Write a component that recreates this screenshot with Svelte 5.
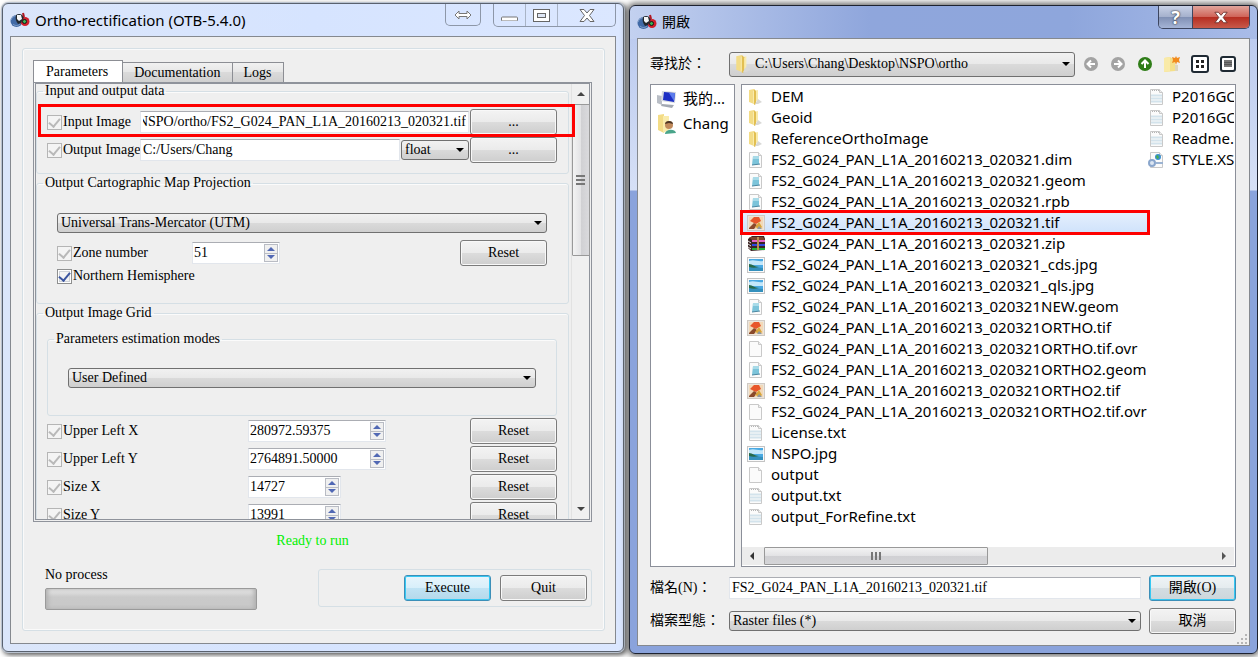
<script>
  const tabs = ['Parameters', 'Documentation', 'Logs'];
  let activeTab = $state('Parameters');

  let inputImage = $state('C:/Users/Chang/Desktop/NSPO/ortho/FS2_G024_PAN_L1A_20160213_020321.tif');
  let outputImage = $state('C:/Users/Chang');
  let zone = $state('51');
  let northern = $state(true);

  let gridRows = $state([
    { id: 'ulx', label: 'Upper Left X', value: '280972.59375', wide: true },
    { id: 'uly', label: 'Upper Left Y', value: '2764891.50000', wide: true },
    { id: 'sizex', label: 'Size X', value: '14727', wide: false },
    { id: 'sizey', label: 'Size Y', value: '13991', wide: false }
  ]);

  const files = [
    { name: 'DEM', kind: 'folder' },
    { name: 'Geoid', kind: 'folder' },
    { name: 'ReferenceOrthoImage', kind: 'folder' },
    { name: 'FS2_G024_PAN_L1A_20160213_020321.dim', kind: 'data' },
    { name: 'FS2_G024_PAN_L1A_20160213_020321.geom', kind: 'data' },
    { name: 'FS2_G024_PAN_L1A_20160213_020321.rpb', kind: 'data' },
    { name: 'FS2_G024_PAN_L1A_20160213_020321.tif', kind: 'tif' },
    { name: 'FS2_G024_PAN_L1A_20160213_020321.zip', kind: 'zip' },
    { name: 'FS2_G024_PAN_L1A_20160213_020321_cds.jpg', kind: 'jpg' },
    { name: 'FS2_G024_PAN_L1A_20160213_020321_qls.jpg', kind: 'jpg' },
    { name: 'FS2_G024_PAN_L1A_20160213_020321NEW.geom', kind: 'data' },
    { name: 'FS2_G024_PAN_L1A_20160213_020321ORTHO.tif', kind: 'tif' },
    { name: 'FS2_G024_PAN_L1A_20160213_020321ORTHO.tif.ovr', kind: 'blank' },
    { name: 'FS2_G024_PAN_L1A_20160213_020321ORTHO2.geom', kind: 'data' },
    { name: 'FS2_G024_PAN_L1A_20160213_020321ORTHO2.tif', kind: 'tif' },
    { name: 'FS2_G024_PAN_L1A_20160213_020321ORTHO2.tif.ovr', kind: 'blank' },
    { name: 'License.txt', kind: 'txt' },
    { name: 'NSPO.jpg', kind: 'jpg' },
    { name: 'output', kind: 'blank' },
    { name: 'output.txt', kind: 'txt' },
    { name: 'output_ForRefine.txt', kind: 'txt' },
    { name: 'P2016GC', kind: 'txt' },
    { name: 'P2016GC', kind: 'txt' },
    { name: 'Readme.txt', kind: 'txt' },
    { name: 'STYLE.XSL', kind: 'xsl' }
  ];
  let selected = $state(6);
  let fileName = $state('FS2_G024_PAN_L1A_20160213_020321.tif');

  function pick(i) {
    selected = i;
    fileName = files[i].name;
  }

  // keep the end of a long path visible
  function scrollToEnd(node) {
    node.scrollLeft = node.scrollWidth;
  }
</script>

{#snippet appIcon()}
  <svg class="app-icon" viewBox="0 0 20 16" aria-hidden="true">
    <circle cx="6.500" cy="9" r="6" fill="#416aa6" />
    <path d="M1 8c1-3 4-5 7-4M3 12c2 2 5 2 7 0" fill="none" stroke="#86a3cc" stroke-width="1" />
    <circle cx="15" cy="9.500" r="4.500" fill="#d0202c" />
    <path d="M6 3c3-2 6-1 8 2l-3 6-3 1c-2-3-3-5-2-9z" fill="#22282e" />
    <path d="M7 3l4 0 1 4-3 2-2-2z" fill="#f3f5f7" />
    <path d="M13 1l1 4" stroke="#b01822" stroke-width="2" />
    <circle cx="14.500" cy="9.500" r="2" fill="#38b356" stroke="#151515" stroke-width="1" />
  </svg>
{/snippet}

{#snippet folderShape()}
  <path d="M2 1l5-1v15l-5-2z" fill="#f3dc86" />
  <path d="M6 2l5-1v10l-5 4z" fill="#f9ebac" />
  <path d="M7 0l2 2v13l-2 1z" fill="#e2bf52" />
  <path d="M11 10l4 3-4 2-3 0z" fill="#d9d9d6" />
{/snippet}

{#snippet fileIcon(kind)}
  <svg class="file-icon" viewBox="0 0 18 16" aria-hidden="true">
    {#if kind === 'folder'}
      {@render folderShape()}
    {:else if kind === 'tif'}
      <rect x="0.500" y="0.500" width="17" height="15" fill="#ece5dc" stroke="#cfcac4" />
      <rect x="2" y="2" width="14" height="12" fill="#f2d9b8" />
      <path d="M3 6l4-4h5l2 4-5 3z" fill="#e8562a" />
      <path d="M2 13l5-5 3 2-3 4H2z" fill="#8a4a2c" />
      <path d="M8 12l4-5 3 5-2 2z" fill="#d9a63a" />
      <path d="M10 14l2-3 3 3z" fill="#8d99a4" />
    {:else if kind === 'jpg'}
      <rect x="0.500" y="0.500" width="17" height="15" fill="#fafafa" stroke="#c4c4c4" />
      <rect x="2" y="2" width="14" height="12" fill="#4aa9e2" />
      <path d="M2 4c5-2 9 1 14 0v4H2z" fill="#c3e7fa" />
      <path d="M2 9c4-1 6 2 14 2v3H2z" fill="#3490bd" />
      <path d="M2 7c4 0 5 3 10 3-4 1-7 1-10 0z" fill="#276a4a" />
    {:else if kind === 'zip'}
      <path d="M1 3l4-3h12l1 3v11l-14 1-3-3z" fill="#3c2424" />
      <path d="M2 1h14l2 3H5z" fill="#7c4630" />
      <path d="M5 5h13" stroke="#e465c8" stroke-width="2" />
      <path d="M5 9h13" stroke="#2d49e0" stroke-width="2" />
      <path d="M5 13h13" stroke="#1fae36" stroke-width="2" />
      <path d="M1 5l3 2M1 8l3 2M1 11l3 2" stroke="#ddd" />
      <path d="M11 1v13" stroke="#b98d52" stroke-width="2" />
    {:else}
      <path d="M2.500 0.500h9l3 3v12h-12z" fill="#fbfbfb" stroke="#c9c9c9" />
      <path d="M11.500 0.500v3h3" fill="#eee" stroke="#c9c9c9" />
      {#if kind === 'data'}
        <path d="M6 4h6v8l-7 1z" fill="#7cc4da" />
        <path d="M6 4h6v3H6z" fill="#a9dbe8" />
        <path d="M5 13l8-1" stroke="#4a86a0" />
      {:else if kind === 'txt'}
        <path d="M4 1.500h7" stroke="#b5b5b5" stroke-dasharray="1 1" />
        <path d="M3 6.500h11M3 9.500h11M3 12.500h11" stroke="#d3e3ec" stroke-width="2" />
      {:else if kind === 'xsl'}
        <circle cx="10" cy="5" r="3" fill="#3a8fd0" />
        <path d="M8 4l2-1 1 3-2 1z" fill="#4cb04a" />
        <circle cx="4" cy="11" r="3" fill="#dce6f2" stroke="#8aa6cc" stroke-width="2" />
        <path d="M8 11h7" stroke="#9bb3d2" stroke-width="2" />
      {/if}
    {/if}
  </svg>
{/snippet}

{#snippet spin(label, wide, value)}
  <span class="spin" class:wide>
    <input class="field" type="text" aria-label={label} {value} />
    <span class="steps">
      <button type="button" aria-label="{label} up"><i class="tri up"></i></button>
      <button type="button" aria-label="{label} down"><i class="tri down"></i></button>
    </span>
  </span>
{/snippet}

<main class="desktop">
  <section class="window ortho" aria-label="Ortho-rectification">
    <header class="titlebar">
      {@render appIcon()}
      <h1>Ortho-rectification (OTB-5.4.0)</h1>
      <div class="caption">
        <button type="button" class="swap" aria-label="Switch">
          <svg width="18" height="10" viewBox="0 0 18 10"><path d="M1 5l4-4v2.500h8V1l4 4-4 4V6.500H5V9z" fill="#fff" stroke="#777" /></svg>
        </button>
        <div class="caption-group">
          <button type="button" class="min" aria-label="Minimize">
            <svg width="17" height="12" viewBox="0 0 17 12"><rect x="0.500" y="8" width="16" height="4" rx="1" fill="#fff" stroke="#777" /></svg>
          </button>
          <button type="button" class="max" aria-label="Maximize">
            <svg width="17" height="13" viewBox="0 0 17 13"><rect x="0.500" y="0.500" width="16" height="12" fill="#fff" stroke="#666" /><rect x="4.500" y="4.500" width="8" height="4" fill="#dfe7f5" stroke="#666" /></svg>
          </button>
          <button type="button" class="close" aria-label="Close">
            <svg width="16" height="13" viewBox="0 0 16 13"><path d="M1 .5h4L8 4l3-3.500h4L10.500 6.500l4.500 6h-4L8 9l-3 3.500H1l4.500-6z" fill="#fff" stroke="#666" /></svg>
          </button>
        </div>
      </div>
    </header>

    <div class="client">
      <div class="frame">
        <div class="tabs" role="tablist">
          {#each tabs as tab}
            <button type="button" role="tab" class:active={tab === activeTab} aria-selected={tab === activeTab} onclick={() => (activeTab = tab)}>{tab}</button>
          {/each}
        </div>

        <div class="pane">
          <div class="scroll">
            <fieldset class="group io">
              <legend>Input and output data</legend>
              <div class="row">
                <label><input type="checkbox" checked disabled />Input Image</label>
                <input class="field grow" type="text" aria-label="Input Image" bind:value={inputImage} use:scrollToEnd />
                <button type="button" class="btn">...</button>
              </div>
              <div class="row">
                <label><input type="checkbox" checked disabled />Output Image</label>
                <input class="field grow" type="text" aria-label="Output Image" bind:value={outputImage} />
                <span class="combo type">
                  <select aria-label="Output pixel type"><option>float</option></select>
                </span>
                <button type="button" class="btn">...</button>
              </div>
            </fieldset>

            <fieldset class="group projection">
              <legend>Output Cartographic Map Projection</legend>
              <span class="combo">
                <select aria-label="Output Cartographic Map Projection"><option>Universal Trans-Mercator (UTM)</option></select>
              </span>
              <div class="row">
                <label><input type="checkbox" checked disabled />Zone number</label>
                {@render spin('Zone number', false, zone)}
                <button type="button" class="btn">Reset</button>
              </div>
              <label><input type="checkbox" bind:checked={northern} />Northern Hemisphere</label>
            </fieldset>

            <fieldset class="group grid">
              <legend>Output Image Grid</legend>
              <fieldset class="group modes">
                <legend>Parameters estimation modes</legend>
                <span class="combo">
                  <select aria-label="Parameters estimation modes"><option>User Defined</option></select>
                </span>
              </fieldset>
              {#each gridRows as row (row.id)}
                <div class="row">
                  <label><input type="checkbox" checked disabled />{row.label}</label>
                  {@render spin(row.label, row.wide, row.value)}
                  <button type="button" class="btn">Reset</button>
                </div>
              {/each}
            </fieldset>
          </div>
          <div class="vbar" aria-hidden="true">
            <i class="tri up"></i>
            <div class="thumb"><i></i></div>
            <i class="tri down"></i>
          </div>
          <div class="mark"></div>
        </div>

        <p class="status">Ready to run</p>

        <div class="bottom">
          <div class="progress">
            <span id="progress-label">No process</span>
            <div class="bar" role="progressbar" aria-labelledby="progress-label" aria-valuenow="0"></div>
          </div>
          <div class="actions">
            <button type="button" class="btn primary">Execute</button>
            <button type="button" class="btn">Quit</button>
          </div>
        </div>
      </div>
    </div>
  </section>

  <section class="window dialog" aria-label="開啟">
    <header class="titlebar">
      {@render appIcon()}
      <h2>開啟</h2>
      <div class="caption">
        <button type="button" class="help" aria-label="Help">?</button>
        <button type="button" class="kill" aria-label="Close">
          <svg width="14" height="13" viewBox="0 0 16 13"><path d="M1 .5h4L8 4l3-3.500h4L10.500 6.500l4.500 6h-4L8 9l-3 3.500H1l4.500-6z" fill="#fff" stroke="#69302c" /></svg>
        </button>
      </div>
    </header>

    <div class="client">
      <div class="lookin">
        <label for="lookin">尋找於：</label>
        <span class="combo">
          <svg class="combo-icon" width="18" height="18" viewBox="0 0 16 16" aria-hidden="true">{@render folderShape()}</svg>
          <select id="lookin"><option>C:\Users\Chang\Desktop\NSPO\ortho</option></select>
        </span>
        <div class="tools">
          <button type="button" aria-label="Back">
            <svg width="16" height="16" viewBox="0 0 16 16"><circle cx="8" cy="8" r="7" fill="#a3a3a3" /><path d="M12 8H5M8 4.500L4.500 8 8 11.500" fill="none" stroke="#fff" stroke-width="2" /></svg>
          </button>
          <button type="button" aria-label="Forward">
            <svg width="16" height="16" viewBox="0 0 16 16"><circle cx="8" cy="8" r="7" fill="#a3a3a3" /><path d="M4 8h7M8 4.500L11.500 8 8 11.500" fill="none" stroke="#fff" stroke-width="2" /></svg>
          </button>
          <button type="button" aria-label="Parent directory">
            <svg width="16" height="16" viewBox="0 0 16 16"><circle cx="8" cy="8" r="7" fill="#2f7d18" /><path d="M8 12V5M4.500 8L8 4.500 11.500 8" fill="none" stroke="#fff" stroke-width="2" /></svg>
          </button>
          <button type="button" aria-label="New folder">
            <svg width="16" height="16" viewBox="0 0 16 16"><path d="M0 2l6-1 5 3v11l-11 1z" fill="#f5e08a" /><path d="M0 2l6-1v14l-6 1z" fill="#f9eaa8" /><path d="M11 9h3v6h-3z" fill="#ddd6bf" /><path d="M12 0l1 2 3-1-1 3 1 3-3-1-1 3-1-3-3 1 1-3-1-3 3 1z" fill="#f28b1d" /></svg>
          </button>
          <button type="button" aria-label="List view">
            <svg width="18" height="18" viewBox="0 0 18 18"><rect x="1" y="1" width="16" height="16" rx="2" fill="#fff" stroke="#1f2a33" stroke-width="2" /><path d="M5 5h3v3H5zM10 5h3v3h-3zM5 10h3v3H5zM10 10h3v3h-3z" fill="#222" /></svg>
          </button>
          <button type="button" aria-label="Detail view">
            <svg width="16" height="16" viewBox="0 0 16 16"><rect x="1" y="1" width="14" height="14" rx="2" fill="#fff" stroke="#1f2a33" stroke-width="2" /><path d="M4 4h8v7H4z" fill="#777" /><path d="M4 6.500h8M4 8.500h8" stroke="#555" /></svg>
          </button>
        </div>
      </div>

      <div class="browser">
        <ul class="places">
          <li>
            <svg width="20" height="18" viewBox="0 0 20 18" aria-hidden="true"><path d="M0 5l5 1v9l-5-2z" fill="#b9bec6" /><path d="M5 1l14 1-1 11-14-2z" fill="#d5d9e0" /><path d="M7 2l11 1-1 9-11-2z" fill="#1c2fc4" /><path d="M12 3l6 0-1 8z" fill="#5c7cec" /><path d="M5 14l12 1-2 3-11-2z" fill="#a3a9b2" /></svg>
            我的...
          </li>
          <li>
            <svg width="20" height="20" viewBox="0 0 20 20" aria-hidden="true"><path d="M1 1l6-1v19l-6-3z" fill="#f3dc86" /><path d="M6 2l6 0v14l-6 3z" fill="#f9ebac" /><path d="M8 20c0-5 10-6 11-1z" fill="#4aa58a" /><circle cx="12" cy="11" r="4" fill="#c08a5c" /><path d="M8 10c0-4 8-4 8 0l-4-1z" fill="#4b3524" /></svg>
            Chang
          </li>
        </ul>
        <div class="listing">
          <ul class="files">
            {#each files as file, i}
              <li>
                <button type="button" class:selected={i === selected} onclick={() => pick(i)}>
                  {@render fileIcon(file.kind)}{file.name}
                </button>
              </li>
            {/each}
          </ul>
          <div class="hbar" aria-hidden="true">
            <i class="tri left"></i>
            <div class="thumb"><i></i></div>
            <i class="tri right"></i>
          </div>
        </div>
      </div>

      <form class="open-form" onsubmit={(e) => e.preventDefault()}>
        <label for="filename">檔名(N)：</label>
        <input id="filename" class="field" type="text" bind:value={fileName} />
        <button type="submit" class="btn primary pale">開啟(O)</button>
        <label for="filetype">檔案型態：</label>
        <span class="combo">
          <select id="filetype"><option>Raster files (*)</option></select>
        </span>
        <button type="button" class="btn">取消</button>
      </form>
      <svg class="grip" width="10" height="10" viewBox="0 0 10 10" aria-hidden="true"><path d="M8 0h2v2H8zM4 4h2v2H4zM8 4h2v2H8zM0 8h2v2H0zM4 8h2v2H4zM8 8h2v2H8z" fill="#b5b5b5" /></svg>
    </div>
  </section>
</main>

<style>
  :global(body) {
    background: #fff;
  }

  .desktop, .desktop * {
    box-sizing: border-box;
  }

  .desktop {
    display: grid;
    grid-template-columns: 622fr 629fr;
    gap: 5px;
    min-height: 100vh;
    padding: 3px 0 3px 2px;
    overflow: hidden;
    font: 14px/18px "Liberation Serif", "Noto Sans CJK TC", serif;
    color: #000;
  }

  button, input, select {
    font: inherit;
    color: inherit;
    margin: 0;
    padding: 0;
  }

  button {
    border: 0;
    background: none;
  }

  h1, h2, p, ul, fieldset {
    margin: 0;
    padding: 0;
  }

  ul {
    list-style: none;
  }

  /* window chrome */
  .window {
    display: flex;
    flex-direction: column;
    min-width: 0;
    padding: 0 7px 7px;
    border: 1px solid #59616e;
    border-radius: 6px;
  }

  .ortho {
    margin-bottom: 2px;
    background: linear-gradient(90deg, #dbe6fa, #d6e4ff 50%, #dbe7ff);
    box-shadow: 0 0 0 1px #b9c2cf, 2px 2px 5px 1px #555;
  }

  .dialog {
    margin-top: 2px;
    border-color: #1d2230;
    background:
      linear-gradient(90deg, #c3d1f0 0, #8fa6dc 240px, #8ea6dc 70%, #a9bce8) top / 100% 33px no-repeat,
      linear-gradient(#b7c7ee, #d6e0f6 184px, #8aa3dc 185px);
    box-shadow: 0 0 6px 2px #666;
  }

  .titlebar {
    display: flex;
    align-items: center;
    gap: 5px;
    height: 32px;
  }

  .titlebar h1, .titlebar h2 {
    flex: 1;
    font: 15px/20px "Noto Sans", "Noto Sans CJK TC", sans-serif;
    white-space: nowrap;
  }

  .titlebar h2 {
    font-size: 14px;
  }

  .app-icon {
    width: 20px;
    height: 16px;
  }

  .caption {
    display: flex;
    align-self: flex-start;
    gap: 12px;
  }

  .caption-group {
    display: flex;
    border: 1px solid #8d97a8;
    border-top: 0;
    border-radius: 0 0 5px 5px;
  }

  .caption button {
    display: flex;
    align-items: center;
    justify-content: center;
    height: 22px;
  }

  .swap {
    width: 36px;
    border: 1px solid #8d97a8;
    border-top: 0;
    border-radius: 0 0 5px 5px;
  }

  .min, .max {
    width: 32px;
    border-right: 1px solid #a9b4c6;
  }

  .close {
    width: 57px;
  }

  .dialog .caption {
    gap: 0;
    border: 1px solid #3d4660;
    border-top: 0;
    border-radius: 0 0 5px 5px;
    overflow: hidden;
  }

  .caption .help {
    width: 33px;
    background: linear-gradient(#c8d1e6, #a4b0cc 50%, #8090b4 51%, #a5b4d6);
    color: #fff;
    font: bold 18px/22px "Noto Sans", sans-serif;
    text-shadow: 0 0 1px #333, 0 0 2px #333;
  }

  .caption .kill {
    width: 57px;
    border-left: 1px solid #3d4660;
    background: linear-gradient(#e0a59c, #d0655a 48%, #b52c20 50%, #c85a4a);
  }

  .client {
    display: flex;
    flex: 1;
    flex-direction: column;
    min-width: 0;
    border: 1px solid #85898f;
    background: #efefef;
  }

  .ortho .client {
    padding: 11px 10px 12px 11px;
  }

  /* shared controls */
  .btn {
    flex: none;
    width: 87px;
    height: 26px;
    border: 1px solid #7b7b7b;
    border-radius: 3px;
    background: linear-gradient(#f3f3f3, #ebebeb 48%, #dcdcdc 50%, #cecece);
    box-shadow: inset 0 0 0 1px #f8f8f8;
  }

  .btn.primary {
    border-color: #3c8fb8;
    background: linear-gradient(#e8f5fc, #d8effa 48%, #c0e3f4 50%, #b4d8ea);
    box-shadow: inset 0 0 0 1px #35c8f3;
  }

  .btn.pale {
    background: linear-gradient(#eff4f6, #e5ecef 48%, #d3dde2 50%, #ccd6db);
  }

  .field {
    min-width: 0;
    height: 22px;
    padding: 0 2px;
    border: 1px solid #e2e6ec;
    border-top-color: #abadb3;
    background: #fff;
    outline: 0;
  }

  .combo {
    position: relative;
    display: flex;
    min-width: 0;
  }

  .combo select {
    appearance: none;
    width: 100%;
    height: 20px;
    padding: 0 20px 0 3px;
    border: 1px solid #707070;
    border-radius: 3px;
    background: linear-gradient(#f1f1f1, #e9e9e9 48%, #dadada 50%, #cfcfcf);
  }

  .combo::after {
    content: '';
    position: absolute;
    right: 5px;
    top: calc(50% - 2px);
    border: 4px solid transparent;
    border-top-color: #000;
    border-bottom: 0;
    pointer-events: none;
  }

  .combo-icon {
    position: absolute;
    left: 5px;
    top: 3px;
  }

  label {
    display: flex;
    align-items: center;
    gap: 1px;
    white-space: nowrap;
  }

  input[type='checkbox'] {
    appearance: none;
    display: grid;
    flex: none;
    place-items: center;
    width: 15px;
    height: 15px;
    border: 1px solid #8e8f8f;
    background: #f4f4f4;
    box-shadow: inset 0 0 0 1px #fff, inset 0 0 0 2px #cfd3d8;
  }

  input[type='checkbox']:checked::after {
    content: '';
    width: 5px;
    height: 9px;
    margin-bottom: 2px;
    border: solid #3b55a0;
    border-width: 0 2px 2px 0;
    transform: rotate(40deg);
  }

  input[type='checkbox']:disabled {
    border-color: #b5b5b5;
    box-shadow: none;
  }

  input[type='checkbox']:disabled::after {
    border-color: #b9b9b9;
  }

  .tri {
    width: 0;
    height: 0;
    border: 4px solid transparent;
  }

  .tri.up {
    border-top: 0;
    border-bottom-color: #444;
  }

  .tri.down {
    border-bottom: 0;
    border-top-color: #444;
  }

  .tri.left {
    border-left: 0;
    border-right-color: #333;
  }

  .tri.right {
    border-right: 0;
    border-left-color: #555;
  }

  /* ortho-rectification form */
  .frame {
    display: flex;
    flex: 1;
    flex-direction: column;
    padding: 11px 12px 20px 10px;
    border: 1px solid #d5dfe5;
    border-radius: 3px;
    box-shadow: inset 0 0 0 1px #fafafa;
  }

  .tabs {
    display: flex;
    align-items: flex-end;
    height: 22px;
  }

  .tabs button {
    height: 20px;
    padding: 0 11px;
    border: 1px solid #8c8e94;
    border-left: 0;
    border-bottom: 0;
    background: linear-gradient(#f1f1f1, #e6e6e6 48%, #dadada 50%, #d0d0d0);
  }

  .tabs button.active {
    height: 22px;
    padding: 0 14px 0 12px;
    border-left: 1px solid #8c8e94;
    background: #fff;
  }

  .pane {
    position: relative;
    display: flex;
    flex: 1 1 0;
    min-height: 0;
    border: 3px double #8f939b;
    border-top-width: 2px;
  }

  .scroll {
    flex: 1;
    min-width: 0;
    height: 435px;
    padding-right: 2px;
    overflow: hidden;
  }

  .group {
    --pad: 10px;
    min-width: 0;
    border: 1px solid #d5dfe5;
    border-radius: 3px;
    box-shadow: inset 0 1px #fbfbfb;
  }

  .group legend {
    height: 18px;
    margin-left: calc(6px - var(--pad));
    padding: 0 2px;
  }

  .io {
    height: 92px;
    margin-top: -2px;
    padding: 8px 11px 0 var(--pad);
  }

  .row {
    display: flex;
    align-items: center;
    gap: 2px;
    height: 28px;
  }

  .io .row {
    gap: 1px;
  }

  .io label {
    width: 92px;
  }

  .grow {
    flex: 1;
  }

  .type {
    width: 68px;
  }

  .projection {
    --pad: 20px;
    height: 130px;
    padding: 21px 21px 0 var(--pad);
  }

  .projection .row {
    margin-top: 6px;
  }

  .projection .row label {
    width: 133px;
  }

  .row .spin + .btn {
    margin-left: auto;
  }

  .grid {
    padding: 8px 11px 0 var(--pad);
  }

  .modes {
    --pad: 20px;
    height: 86px;
    padding: 20px 20px 0 var(--pad);
    margin-bottom: 1px;
  }

  .grid .row label {
    width: 199px;
  }

  .spin {
    display: flex;
    width: 93px;
    height: 22px;
    border: 1px solid #e2e6ec;
    border-top-color: #abadb3;
    background: #fff;
  }

  .spin.wide {
    width: 138px;
  }

  .spin .field {
    flex: 1;
    height: 20px;
    padding: 0 1px;
    border: 0;
  }

  .projection .spin {
    width: 88px;
  }

  .steps {
    display: flex;
    flex-direction: column;
    width: 14px;
    margin: 1px;
    border: 1px solid #b9bcc4;
    background: #f0f0f0;
  }

  .steps button {
    display: grid;
    flex: 1;
    place-items: center;
  }

  .steps button + button {
    border-top: 1px solid #b9bcc4;
  }

  .steps .tri.up {
    border-bottom-color: #5168b4;
  }

  .steps .tri.down {
    border-top-color: #5168b4;
  }

  .vbar {
    display: flex;
    flex-direction: column;
    align-items: center;
    width: 18px;
    padding: 8px 0;
    border-left: 1px solid #e2e2e2;
    background: #f0f0f0;
  }

  .vbar .thumb {
    display: grid;
    place-items: center;
    width: 18px;
    height: 152px;
    margin: 8px 0 auto;
    border: 1px solid #999;
    border-radius: 1px;
    background: linear-gradient(90deg, #f3f3f3, #e3e3e5 48%, #d0d0d3 50%, #dadadd);
  }

  .vbar .thumb i {
    width: 9px;
    height: 10px;
    background: repeating-linear-gradient(#777 0 2px, transparent 2px 4px);
  }

  /* highlights the input image row, running over the scrollbar */
  .mark {
    position: absolute;
    top: 20px;
    left: 2px;
    right: 14px;
    height: 33px;
    border: 3px solid #fe0000;
    pointer-events: none;
  }

  .status {
    margin-top: 10px;
    color: #00f000;
    text-align: center;
  }

  .bottom {
    display: flex;
    justify-content: space-between;
    align-items: center;
    margin-top: 16px;
  }

  .progress {
    width: 38%;
    margin-left: 12px;
  }

  .bar {
    height: 22px;
    margin-top: 4px;
    border: 1px solid #9a9a9a;
    border-radius: 2px;
    background: linear-gradient(#e9e9e9, #cacaca 40%, #c8c8c8);
    box-shadow: inset 3px 0 4px -1px #b0b0b0, inset -3px 0 4px -1px #b0b0b0;
  }

  .actions {
    display: flex;
    gap: 9px;
    width: 49%;
    justify-content: flex-end;
    padding: 5px 4px;
    border: 1px solid #d5dfe5;
    border-radius: 3px;
  }

  /* open dialog */
  .dialog .client {
    position: relative;
    padding: 13px 13px 11px 12px;
  }

  .lookin {
    display: flex;
    align-items: center;
    height: 24px;
    margin-bottom: 8px;
  }

  .dialog label {
    flex: none;
    width: 79px;
  }

  .lookin .combo {
    flex: 1;
  }

  .lookin select {
    height: 25px;
    padding-left: 25px;
  }

  .tools {
    display: flex;
    align-items: center;
    gap: 11px;
    margin-left: 8px;
  }

  .tools button {
    display: flex;
  }

  .browser {
    display: flex;
    flex: 1;
    gap: 6px;
    min-height: 0;
    font: 15px/21px "Noto Sans", "Noto Sans CJK TC", sans-serif;
  }

  .places, .listing {
    border: 1px solid #8b8f99;
    background: #fff;
  }

  .places {
    flex: none;
    width: 85px;
    padding: 1px 0 0 6px;
    overflow: hidden;
  }

  .places li {
    display: flex;
    align-items: center;
    gap: 6px;
    height: 25px;
    white-space: nowrap;
  }

  .listing {
    display: flex;
    flex: 1;
    flex-direction: column;
    min-width: 0;
    padding: 1px 1px 1px 0;
  }

  .files {
    display: grid;
    flex: 1;
    grid-auto-flow: column;
    grid-template-rows: repeat(21, 21px);
    grid-auto-columns: 401px;
    /* clips the last column but lets the selection frame cross the left border */
    clip-path: inset(0 0 0 -6px);
  }

  .files button {
    display: flex;
    align-items: center;
    gap: 6px;
    width: 100%;
    height: 21px;
    padding-left: 5px;
    white-space: nowrap;
  }

  .files .selected {
    width: calc(100% + 5px);
    background: linear-gradient(#e6f0fd, #cfe2fb);
    outline: 3px solid #fe0000;
    outline-offset: -1px;
  }

  .file-icon {
    flex: none;
    width: 18px;
    height: 16px;
  }

  .hbar {
    display: flex;
    align-items: center;
    height: 18px;
    padding: 0 8px;
    background: #ececec;
  }

  .hbar .thumb {
    display: grid;
    place-items: center;
    width: 47%;
    height: 18px;
    margin: 0 auto 0 10px;
    border: 1px solid #999;
    border-radius: 1px;
    background: linear-gradient(#f3f3f3, #e3e3e5 48%, #d0d0d3 50%, #d4d4d7);
  }

  .hbar .thumb i {
    width: 10px;
    height: 8px;
    background: repeating-linear-gradient(90deg, #777 0 2px, transparent 2px 4px);
  }

  .open-form {
    display: grid;
    grid-template-columns: 79px 1fr 95px;
    align-items: center;
    row-gap: 7px;
    margin-top: 8px;
  }

  .open-form .btn {
    justify-self: end;
  }

  .grip {
    position: absolute;
    right: 2px;
    bottom: 1px;
  }
</style>
